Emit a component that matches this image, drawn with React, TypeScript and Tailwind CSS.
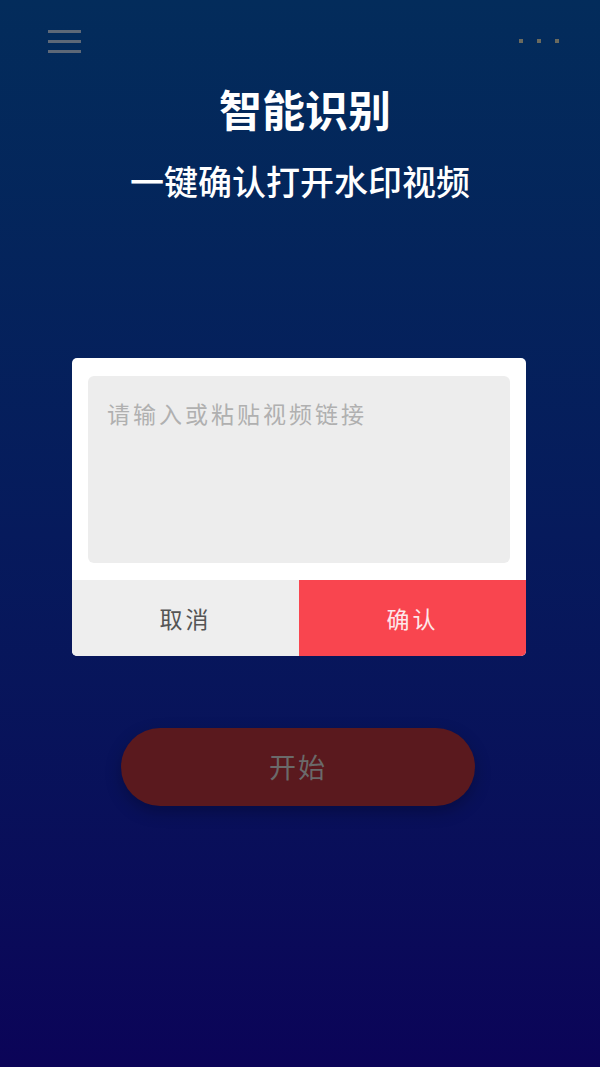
export default function App() {
  return (
    <div
      className="flex min-h-[1067px] w-full flex-col bg-gradient-to-b from-[#032c5b] via-[#061a5c] to-[#0b0458]"
      style={{ fontFamily: '"Noto Sans CJK SC", "Noto Sans", sans-serif' }}
    >
      <div className="flex items-start justify-between pl-[48px] pr-[41px] pt-[30px]">
        <div className="flex w-[33px] flex-col gap-[7px]">
          <span className="block h-[3px] bg-[#5d6877]" />
          <span className="block h-[3px] bg-[#5d6877]" />
          <span className="block h-[3px] bg-[#5d6877]" />
        </div>
        <div className="mt-[9px] flex gap-[14px]">
          <span className="block h-[4px] w-[4px] bg-[#6b6a5e]" />
          <span className="block h-[4px] w-[4px] bg-[#6b6a5e]" />
          <span className="block h-[4px] w-[4px] bg-[#6b6a5e]" />
        </div>
      </div>

      <h1 className="mt-[27px] pl-[10px] text-center text-[43px] font-bold leading-[56px] text-white">
        智能识别
      </h1>
      <p className="mt-[23px] text-center text-[34px] font-medium leading-[44px] text-white">
        一键确认打开水印视频
      </p>

      <div className="ml-[72px] mt-[155px] w-[454px] overflow-hidden rounded-[5px] bg-white">
        <div className="px-[16px] pt-[18px] pb-[17px]">
          <div className="h-[187px] rounded-[6px] bg-[#ededed] px-[19px] pt-[21px] text-[23px] leading-[32px] tracking-[3px] text-[#b0b0b0]">
            请输入或粘贴视频链接
          </div>
        </div>
        <div className="flex h-[76px]">
          <button className="flex flex-1 items-center justify-center bg-[#eeeeee] text-[23px] tracking-[3px] text-[#555555]">
            取消
          </button>
          <button className="flex flex-1 items-center justify-center bg-[#f9454f] text-[23px] tracking-[3px] text-[#fde8ea]">
            确认
          </button>
        </div>
      </div>

      <button className="ml-[121px] mt-[72px] flex h-[78px] w-[354px] items-center justify-center rounded-full bg-[#5a191e] text-[27px] tracking-[2px] text-[#6a6a6a] shadow-[0_6px_16px_rgba(0,0,0,0.25)]">
        开始
      </button>
    </div>
  );
}
